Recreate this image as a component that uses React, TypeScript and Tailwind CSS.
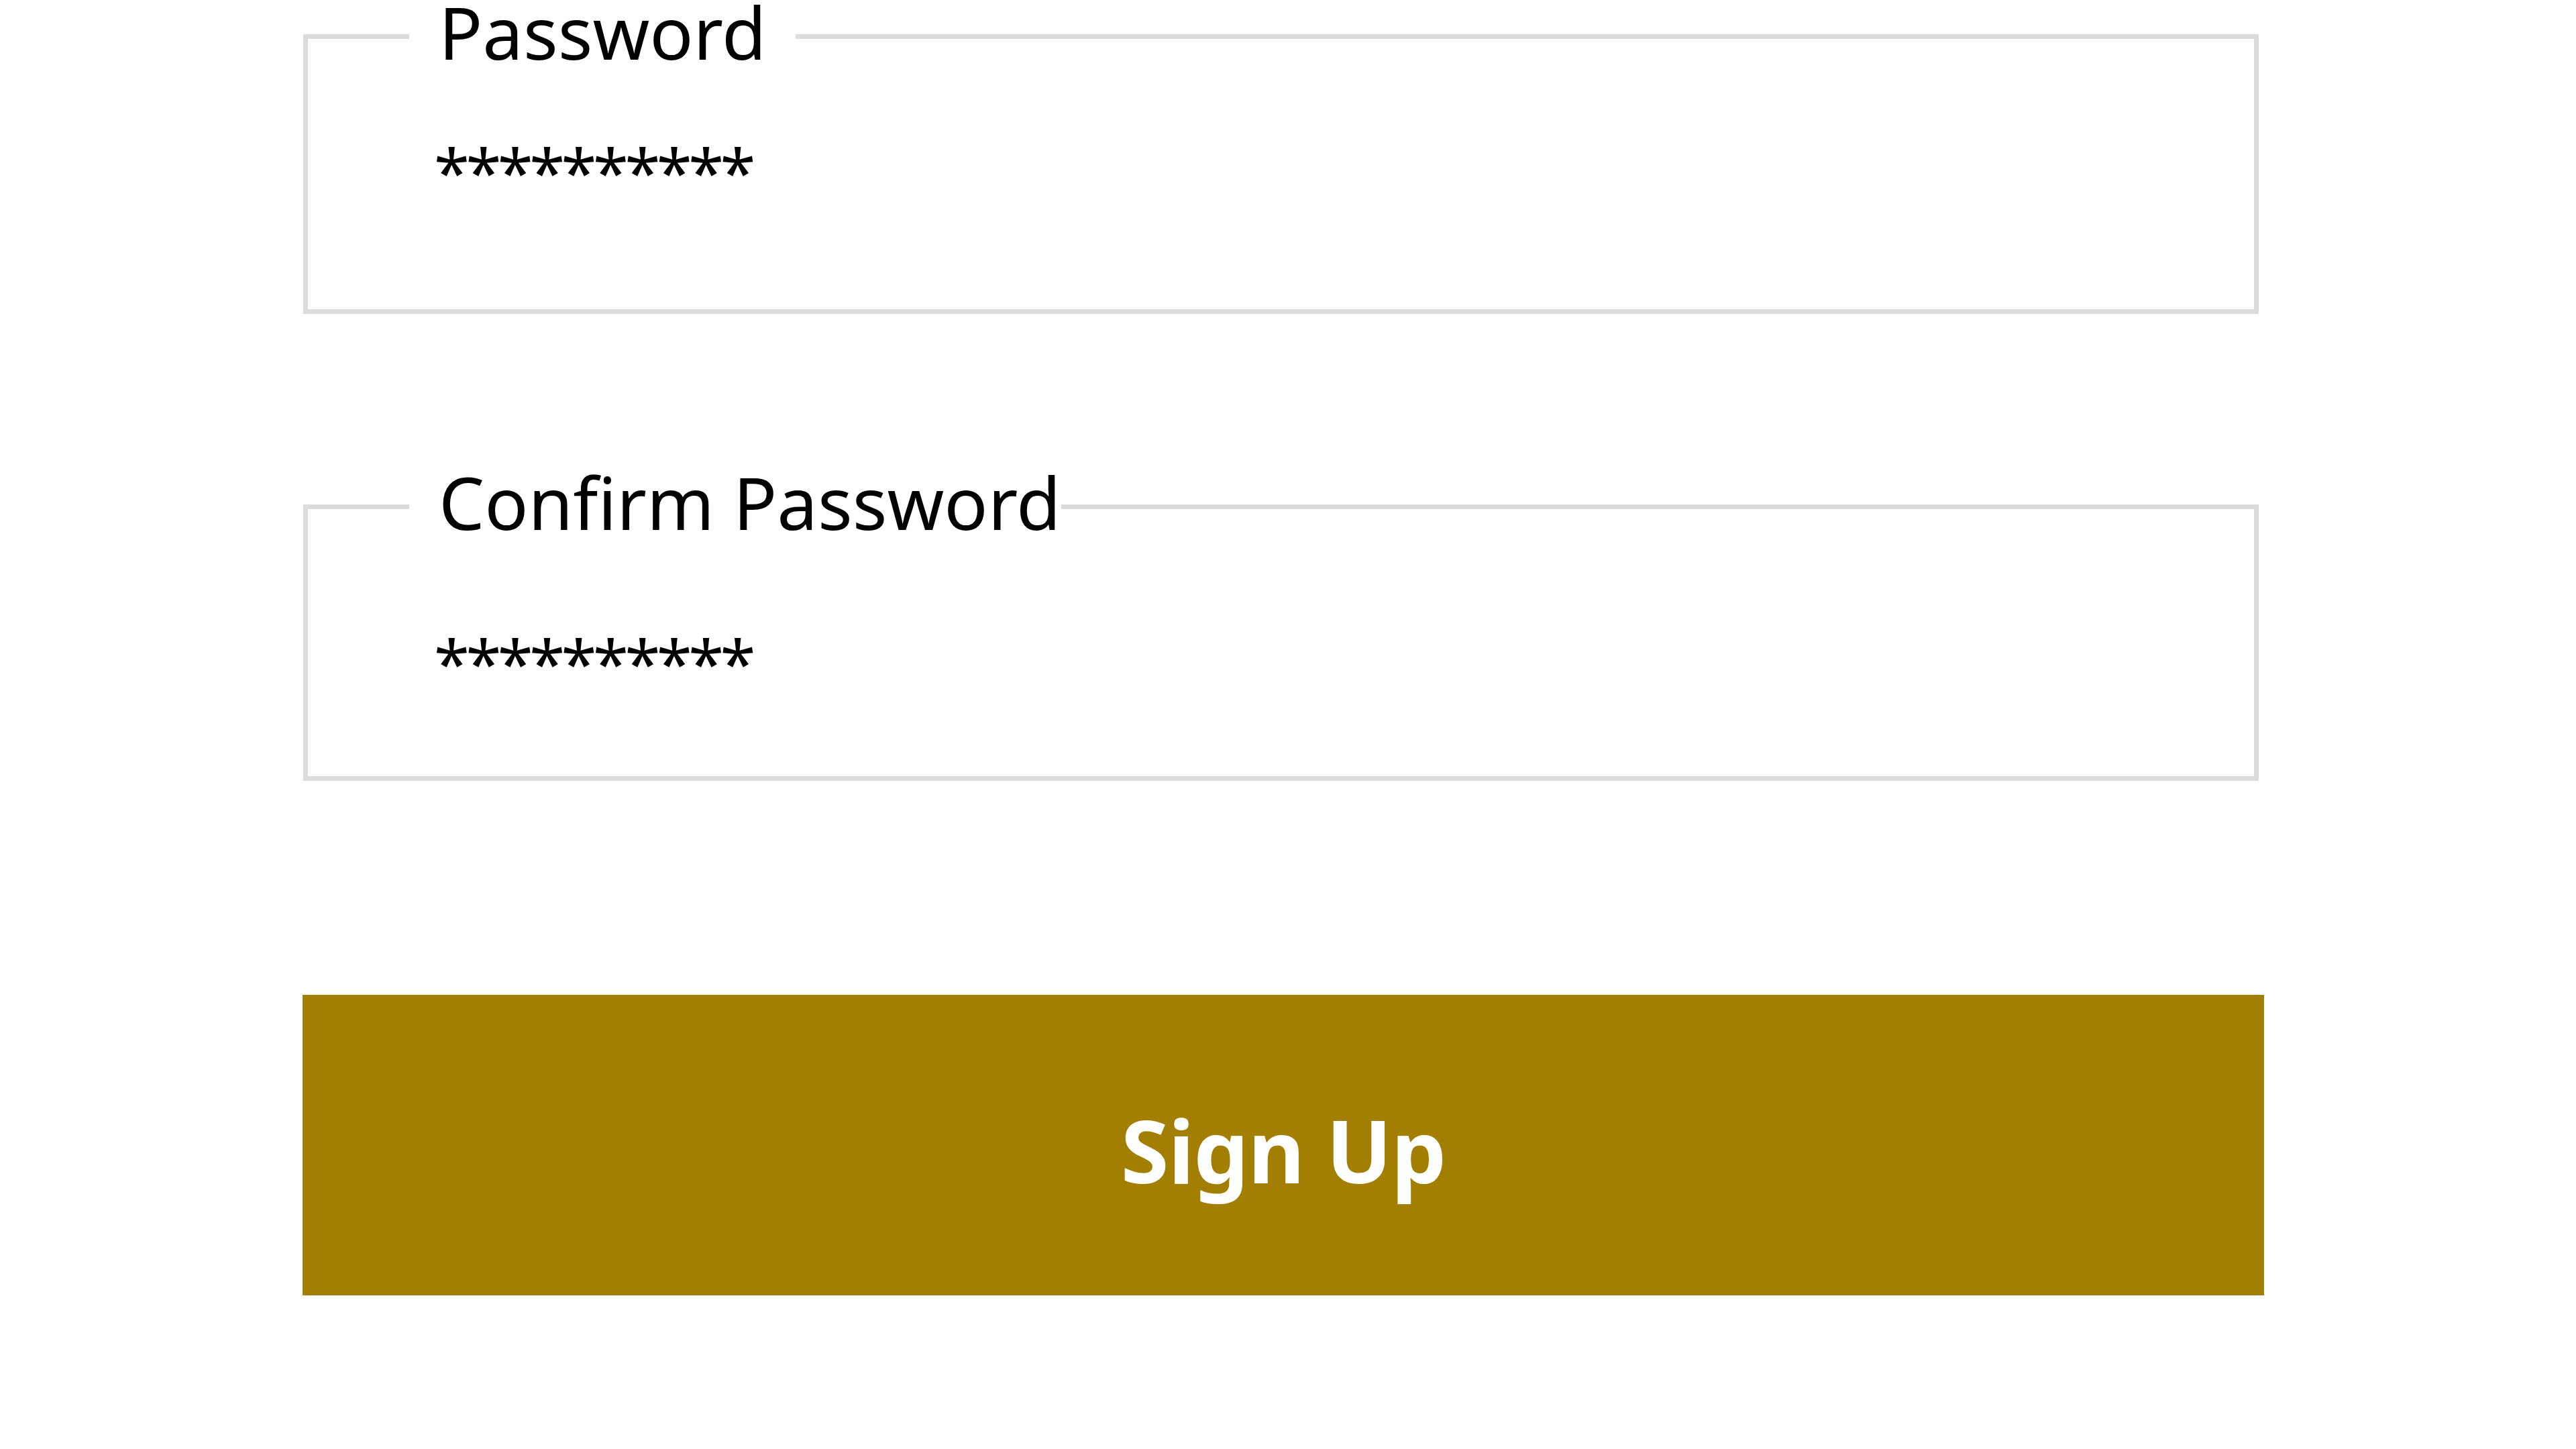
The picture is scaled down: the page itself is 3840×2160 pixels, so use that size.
type FieldProps = {
  label: string;
  value: string;
  gap: string;
  legendClass: string;
  valueClass: string;
};

function Field({ label, value, gap, legendClass, valueClass }: FieldProps) {
  return (
    <fieldset className={`border-[7px] border-[#dcdcdc] ${gap}`}>
      <legend className={`ml-[151px] pl-[44px] pb-[13px] text-[108px] leading-none ${legendClass}`}>{label}</legend>
      <div className={`ml-[188px] text-[96px] leading-none tracking-[-5.5px] ${valueClass}`}>{value}</div>
    </fieldset>
  );
}

export default function App() {
  return (
    <div className="min-h-screen overflow-hidden bg-white font-['Noto_Sans',sans-serif] text-black">
      <form className="-mt-[6px] ml-[452px] flex w-[2915px] flex-col">
        <Field label="Password" value="**********" gap="" legendClass="pr-[44px]" valueClass="mt-[93px] mb-[157px]" />
        <Field
          label="Confirm Password"
          value="**********"
          gap="mt-[227px]"
          legendClass="pr-0"
          valueClass="mt-[124px] mb-[121px]"
        />
        <button
          type="submit"
          className="-ml-[1px] mt-[319px] h-[448px] w-[2924px] bg-[#a37f01] pt-[14px] text-[130px] font-bold leading-none tracking-[-1px] text-white"
        >
          Sign Up
        </button>
      </form>
    </div>
  );
}
